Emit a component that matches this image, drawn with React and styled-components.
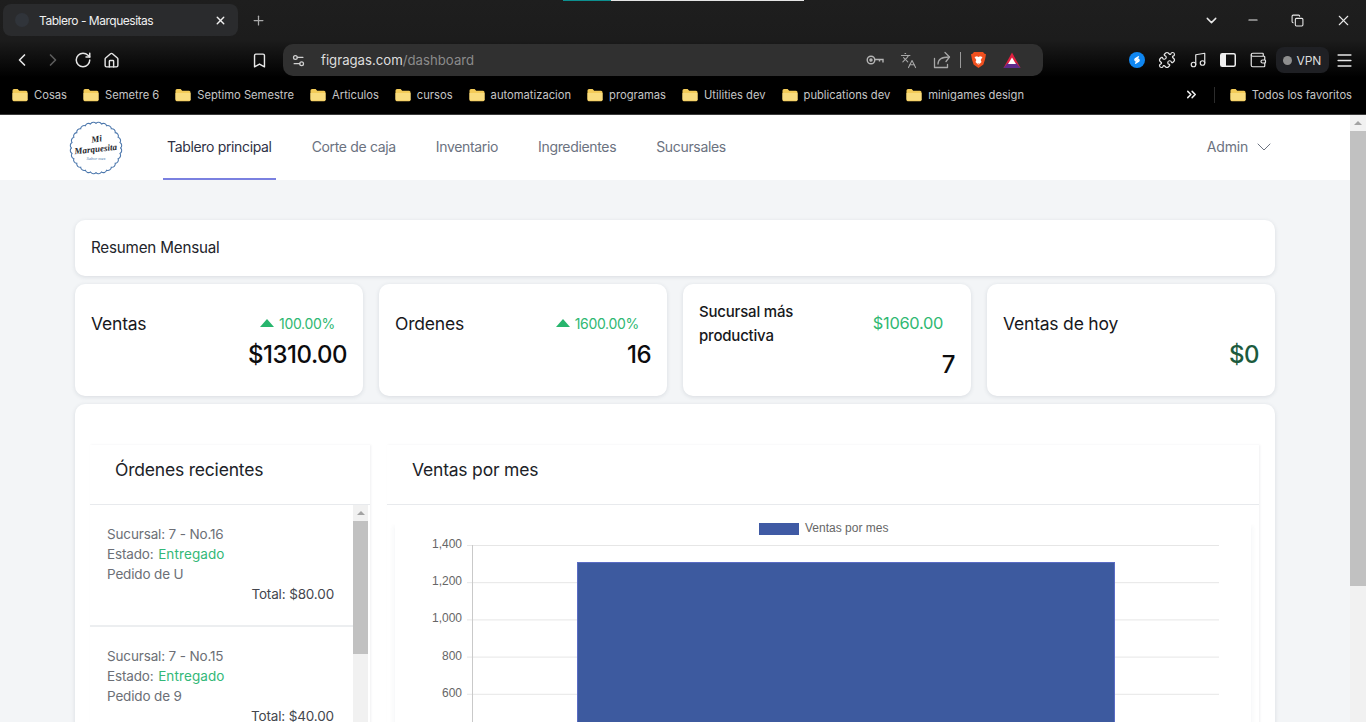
import React from 'react';
import styled, { createGlobalStyle } from 'styled-components';
import {
  ChevronLeft,
  ChevronRight,
  ChevronDown,
  ChevronsRight,
  RotateCw,
  Home,
  Bookmark,
  Settings2,
  Languages,
  Puzzle,
  Music,
  Wallet,
  Menu,
  X,
  Minus,
  Plus,
  Copy,
} from 'lucide-react';

const bookmarks = [
  'Cosas',
  'Semetre 6',
  'Septimo Semestre',
  'Articulos',
  'cursos',
  'automatizacion',
  'programas',
  'Utilities dev',
  'publications dev',
  'minigames design',
];

const navItems = ['Tablero principal', 'Corte de caja', 'Inventario', 'Ingredientes', 'Sucursales'];

const stats = [
  { label: 'Ventas', delta: '100.00%', arrow: true, value: '$1310.00' },
  { label: 'Ordenes', delta: '1600.00%', arrow: true, value: '16' },
  { label: 'Sucursal más productiva', delta: '$1060.00', small: true, value: '7' },
  { label: 'Ventas de hoy', value: '$0', green: true },
];

const orders = [
  { id: '7 - No.16', who: 'U', total: '$80.00' },
  { id: '7 - No.15', who: '9', total: '$40.00' },
];

const Global = createGlobalStyle`
  html, body {
    margin: 0;
    padding: 0;
    overflow: hidden;
    background: #000;
  }
  * {
    box-sizing: border-box;
  }
`;

const Screen = styled.div`
  position: relative;
  width: 1366px;
  height: 722px;
  overflow: hidden;
  display: flex;
  flex-direction: column;
  font-family: 'Inter', 'Liberation Sans', sans-serif;
`;

const Chrome = styled.div`
  height: 115px;
  flex: none;
  background: linear-gradient(180deg, #1e1e1e 0%, #1c1c1c 35%, #000 68%, #000 100%);
  border-bottom: 1px solid #3a3a3a;
  color: #e8e8e8;
`;

const LoadBar = styled.div`
  position: absolute;
  top: 0;
  left: 563px;
  width: 241px;
  height: 1px;
  background: linear-gradient(90deg, #0c8f8f 0 48px, #e4e4e4 48px);
`;

const TabStrip = styled.div`
  height: 40px;
  display: flex;
  align-items: center;
  padding: 4px 0 4px 3px;
`;

const Tab = styled.div`
  width: 235px;
  height: 32px;
  background: #2a2b2d;
  border-radius: 8px;
  display: flex;
  align-items: center;
  padding: 0 11px 0 12px;
  font-size: 12px;
  color: #f0f0f0;
`;

const Favicon = styled.span`
  width: 14px;
  height: 14px;
  margin-right: 10px;
  border-radius: 50%;
  background: #30343a;
  flex: none;
`;

const TabTitle = styled.span`
  flex: 1;
  letter-spacing: -0.48px;
`;

const NewTab = styled.div`
  display: flex;
  margin-left: 13px;
  color: #aaa;
`;

const WindowButtons = styled.div`
  margin-left: auto;
  display: flex;
  align-items: center;
  gap: 31px;
  padding-right: 14px;
`;

const TabListChevron = styled(ChevronDown)`
  margin-right: -5px;
`;

const Toolbar = styled.div`
  height: 40px;
  display: flex;
  align-items: center;
  padding: 0 12px 0 12px;
`;

const ToolGroup = styled.div`
  display: flex;
  align-items: center;
  gap: ${(p) => p.$gap || 12}px;
  color: ${(p) => p.$color || '#e6e6e6'};
`;

const BookmarkSlot = styled.div`
  display: flex;
  margin-left: 131px;
`;

const Omnibox = styled.div`
  width: 760px;
  height: 32px;
  margin-left: 15px;
  background: #303030;
  border-radius: 10px;
  display: flex;
  align-items: center;
  padding: 0 22px 0 8px;
  font-size: 13.2px;
  color: #dedede;
`;

const UrlHost = styled.span`
  margin-left: 15px;
`;

const UrlPath = styled.span`
  color: #8b8b8b;
`;

const Divider = styled.span`
  width: 1px;
  height: 16px;
  background: #9a9a9a;
`;

const BookmarkDivider = styled(Divider)`
  margin: 0 15px;
  background: #2c2c2c;
`;

const VpnPill = styled.div`
  height: 26px;
  margin: 0 -7px 0 -4px;
  padding: 0 8px 0 7px;
  background: #1f2024;
  border-radius: 8px;
  display: flex;
  align-items: center;
  gap: 5px;
  font-size: 12px;
  letter-spacing: -0.2px;
  color: #dcdcdc;
`;

const VpnDot = styled.span`
  width: 9px;
  height: 9px;
  border-radius: 50%;
  background: #8e8e8e;
`;

const BookmarkBar = styled.div`
  height: 34px;
  display: flex;
  align-items: center;
  padding: 0 14px 5px 12px;
  font-size: 11.2px;
  color: #c6c6c6;
`;

const BookmarkItem = styled.div`
  display: flex;
  align-items: center;
  gap: 6px;
  margin-right: ${(p) => p.$gap ?? 16}px;
  white-space: nowrap;
`;

const Spacer = styled.div`
  flex: 1;
`;

const Viewport = styled.div`
  flex: 1;
  min-height: 0;
  display: flex;
  background: #f3f5f7;
`;

const Page = styled.div`
  flex: 1;
  min-width: 0;
  overflow: hidden;
`;

const Scrollbar = styled.div`
  width: ${(p) => p.$width}px;
  flex: none;
  background: #f1f1f1;
  display: flex;
  flex-direction: column;
  align-items: center;
`;

const ScrollArrow = styled.div`
  height: 16px;
  flex: none;
  display: flex;
  align-items: center;
  justify-content: center;
  &::before {
    content: '';
    border-left: 4px solid transparent;
    border-right: 4px solid transparent;
    border-bottom: 4px solid #a3a3a3;
  }
`;

const ScrollThumb = styled.div`
  width: 100%;
  height: ${(p) => p.$height}px;
  background: #c1c1c1;
  flex: none;
`;

const Navbar = styled.nav`
  height: 65px;
  background: #fff;
  display: flex;
  align-items: stretch;
  padding: 0 74px 0 69px;
`;

const LogoSlot = styled.div`
  width: 94px;
  display: flex;
  align-items: center;
`;

const NavLinks = styled.div`
  display: flex;
  gap: 32px;
`;

const NavLink = styled.a`
  display: flex;
  align-items: center;
  padding: 0 4px;
  font-size: 14px;
  letter-spacing: -0.34px;
  color: ${(p) => (p.$active ? '#2e3145' : '#6b7280')};
  border-bottom: 2px solid ${(p) => (p.$active ? '#7a80e0' : 'transparent')};
`;

const AdminMenu = styled.div`
  margin-left: auto;
  display: flex;
  align-items: center;
  gap: 4px;
  padding-bottom: 2px;
  font-size: 14px;
  letter-spacing: -0.2px;
  color: #6b7280;
`;

const Container = styled.main`
  width: 1200px;
  margin: 40px 0 0 75px;
  display: flex;
  flex-direction: column;
  gap: 8px;
`;

const Card = styled.section`
  background: #fff;
  border-radius: 10px;
  box-shadow: 0 1px 4px rgba(60, 70, 90, 0.14);
`;

const SummaryCard = styled(Card)`
  height: 56px;
  display: flex;
  align-items: center;
  padding: 0 16px 2px;
  font-size: 15.2px;
  letter-spacing: -0.2px;
  color: #22242a;
`;

const StatGrid = styled.div`
  display: grid;
  grid-template-columns: repeat(4, 288px);
  gap: 16px;
`;

const StatCard = styled(Card)`
  height: 112px;
  padding: ${(p) => (p.$small ? 2 : 4)}px 16px 0;
  display: flex;
  flex-direction: column;
  justify-content: center;
`;

const StatTop = styled.div`
  display: flex;
  align-items: center;
  justify-content: space-between;
  padding-right: 12px;
`;

const StatLabel = styled.div`
  font-size: ${(p) => (p.$small ? 15 : 17.5)}px;
  font-weight: ${(p) => (p.$small ? 500 : 400)};
  line-height: 24px;
  max-width: ${(p) => (p.$small ? '125px' : 'none')};
  letter-spacing: -0.2px;
  color: #17181c;
`;

const Delta = styled.div`
  display: flex;
  align-items: center;
  gap: 5px;
  margin-bottom: 2px;
  font-size: ${(p) => (p.$arrow ? 14 : 16.4)}px;
  letter-spacing: -0.3px;
  color: #2fb872;
  &::before {
    content: ${(p) => (p.$arrow ? "''" : 'none')};
    border-left: 7px solid transparent;
    border-right: 7px solid transparent;
    border-bottom: 8px solid #27b56d;
  }
`;

const StatValue = styled.div`
  margin-top: ${(p) => (p.$small ? 0 : 2)}px;
  text-align: right;
  font-size: 24px;
  font-weight: 500;
  line-height: 34px;
  letter-spacing: -0.5px;
  color: ${(p) => (p.$green ? '#1c5b3e' : '#0c0c0e')};
`;

const MainCard = styled(Card)`
  height: 340px;
  padding: 41px 15px 0;
  display: grid;
  grid-template-columns: 280px 872px;
  gap: 17px;
  align-items: start;
`;

const Panel = styled.div`
  background: #fff;
  box-shadow: 1px 0 2px rgba(60, 70, 90, 0.08);
  height: 300px;
`;

const PanelHead = styled.div`
  height: 60px;
  display: flex;
  align-items: center;
  padding: 0 25px 10px;
  font-size: 17.5px;
  letter-spacing: -0.2px;
  color: #202228;
  border-bottom: 1px solid #e8eaed;
`;

const ListFrame = styled.div`
  display: flex;
  height: 240px;
  padding-right: 2px;
`;

const OrderList = styled.div`
  flex: 1;
  min-width: 0;
`;

const OrderItem = styled.div`
  height: 122px;
  padding: 19px 19px 0 17px;
  font-size: 13.5px;
  line-height: 20px;
  letter-spacing: -0.15px;
  color: #6c6f76;
  border-bottom: 2px solid #eceef0;
`;

const Delivered = styled.span`
  margin-left: 1px;
  letter-spacing: 0.1px;
  color: #33b878;
`;

const OrderTotal = styled.div`
  text-align: right;
  color: #44464d;
`;

const ChartFrame = styled.div`
  margin: 17px 8px 0;
  height: 225px;
  box-shadow: -2px 4px 4px rgba(60, 70, 90, 0.04), 2px 4px 4px rgba(60, 70, 90, 0.04);
`;

const FolderIcon = () => (
  <svg width="16" height="14" viewBox="0 0 16 14">
    <path d="M0.5 2.5a1.5 1.5 0 0 1 1.5-1.5h3.6l1.6 1.7h6.8a1.5 1.5 0 0 1 1.5 1.5v7.6a1.5 1.5 0 0 1-1.5 1.5H2a1.5 1.5 0 0 1-1.5-1.5z" fill="#f3cb58" />
    <path d="M0.5 5h15v6a1 1 0 0 1-1 1.5H2a1.5 1.5 0 0 1-1.5-1.5z" fill="#f9dc7e" />
  </svg>
);

const KeyIcon = () => (
  <svg width="18" height="10" viewBox="0 0 18 10" fill="none" stroke="#b5b5b5" strokeWidth="1.4">
    <circle cx="5" cy="5" r="3.8" />
    <circle cx="5" cy="5" r="1" fill="#b5b5b5" />
    <path d="M9 4.5h8v3M13.5 4.5v2" />
  </svg>
);

const ShareOutIcon = () => (
  <svg width="18" height="18" viewBox="0 0 18 18" fill="none" stroke="#a8a8a8" strokeWidth="1.3" strokeLinecap="round" strokeLinejoin="round">
    <path d="M1.5 7.5v9h13v-3" />
    <path d="M5 13c0-4.5 3.5-7 11-7" />
    <path d="M12 1.5l4.5 4.5-3.5 4.5" />
  </svg>
);

const BraveIcon = () => (
  <svg width="17" height="18" viewBox="0 0 17 18">
    <path d="M4 1h9l1.5 1.8 1.5.4-1 5.3-1.6 5-4.9 3.5-4.9-3.5-1.6-5-1-5.3 1.5-.4z" fill="#f0501f" />
    <path d="M4.5 6l2.5-.8 1.5.8 1.5-.8 2.5.8-1.8 3 .8 2-3 3-3-3 .8-2z" fill="#fff" />
    <path d="M7.3 12.5h2.4l-1.2 1.2z" fill="#f0501f" />
  </svg>
);

const BatIcon = () => (
  <svg width="18" height="17" viewBox="0 0 18 17">
    <path d="M9 0.5L17.5 16H0.5z" fill="#e0203f" />
    <path d="M0.5 16L4.8 11h8.4L17.5 16z" fill="#5d2a8c" />
    <path d="M9 5.5L13 12H5z" fill="#fff" />
  </svg>
);

const ShazamIcon = () => (
  <svg width="16" height="16" viewBox="0 0 16 16">
    <circle cx="8" cy="8" r="8" fill="#0f86f0" />
    <path d="M9.4 4.8L6.3 6.7a1.4 1.4 0 0 0 1.4 2.3l.9-.5M6.6 11.2l3.1-1.9a1.4 1.4 0 0 0-1.4-2.3l-.9.5" fill="none" stroke="#fff" strokeWidth="1.4" strokeLinecap="round" />
  </svg>
);

const SidebarIcon = () => (
  <svg width="16" height="14" viewBox="0 0 16 14">
    <rect x="0.75" y="0.75" width="14.5" height="12.5" rx="1.5" fill="none" stroke="#eee" strokeWidth="1.5" />
    <rect x="1" y="1" width="5" height="12" fill="#eee" />
  </svg>
);

// wavy badge edge: small arcs between points of a circle
const scallopPath = (cx, cy, r, count) => {
  const at = (i) => {
    const a = (i / count) * Math.PI * 2;
    return `${(cx + r * Math.cos(a)).toFixed(2)} ${(cy + r * Math.sin(a)).toFixed(2)}`;
  };
  let d = `M${at(0)}`;
  for (let i = 1; i <= count; i++) d += `A3.4 3.4 0 0 1 ${at(i)}`;
  return `${d}Z`;
};

const ShopLogo = () => (
  <svg width="54" height="54" viewBox="0 0 54 54">
    <path d={scallopPath(27, 27, 24.6, 28)} fill="#fff" stroke="#4d78ad" strokeWidth="1.1" />
    <g fontFamily="'Liberation Serif', serif" fontWeight="700" fontStyle="italic" fill="#23252b" textAnchor="middle">
      <text x="28" y="21" fontSize="9" transform="rotate(-8 28 21)">Mi</text>
      <text x="27" y="31" fontSize="9" transform="rotate(-6 27 31)">Marquesita</text>
      <text x="27" y="39" fontSize="4.5" fontWeight="400" fill="#4d78ad">Sabor mex</text>
    </g>
  </svg>
);

const ticks = [
  { label: '1,400', y: 23 },
  { label: '1,200', y: 60.2 },
  { label: '1,000', y: 97.4 },
  { label: '800', y: 134.6 },
  { label: '600', y: 171.8 },
];

const SalesChart = () => (
  <svg width="856" height="225" viewBox="0 0 856 225">
    <rect x="364" y="1" width="40" height="12" fill="#3f5aa4" />
    <text x="410" y="10" fontFamily="'Liberation Sans', sans-serif" fontSize="12" fill="#666">Ventas por mes</text>
    {ticks.map((t) => (
      <g key={t.label}>
        <line x1="72" x2="824" y1={t.y + 0.5} y2={t.y + 0.5} stroke="#e6e6e6" />
        <text x="67" y={t.y + 3} textAnchor="end" fontFamily="'Liberation Sans', sans-serif" fontSize="12" fill="#666">{t.label}</text>
      </g>
    ))}
    <line x1="77.5" x2="77.5" y1="23" y2="225" stroke="#c9c9c9" />
    <rect x="182.5" y="40.5" width="537" height="190" fill="#3d5a9f" stroke="#5a6cc4" />
  </svg>
);

const App = () => (
  <Screen>
    <Global />
    <Chrome>
      <LoadBar />
      <TabStrip>
        <Tab>
          <Favicon />
          <TabTitle>Tablero - Marquesitas</TabTitle>
          <X size={13} strokeWidth={2.5} />
        </Tab>
        <NewTab>
          <Plus size={15} />
        </NewTab>
        <WindowButtons>
          <TabListChevron size={17} />
          <Minus size={14} />
          <Copy size={13} />
          <X size={17} strokeWidth={1.5} />
        </WindowButtons>
      </TabStrip>
      <Toolbar>
        <ToolGroup $gap={11}>
          <ChevronLeft size={20} />
          <ChevronRight size={20} color="#5c5c5c" />
          <RotateCw size={18} />
          <Home size={17} />
        </ToolGroup>
        <BookmarkSlot>
          <Bookmark size={17} />
        </BookmarkSlot>
        <Omnibox>
          <Settings2 size={15} color="#d0d0d0" />
          <UrlHost>
            figragas.com<UrlPath>/dashboard</UrlPath>
          </UrlHost>
          <Spacer />
          <ToolGroup $gap={16} $color="#a8a8a8">
            <KeyIcon />
            <Languages size={17} strokeWidth={1.5} />
            <ToolGroup $gap={9} $color="#a8a8a8">
              <ShareOutIcon />
              <Divider />
              <BraveIcon />
            </ToolGroup>
            <BatIcon />
          </ToolGroup>
        </Omnibox>
        <Spacer />
        <ToolGroup $gap={13}>
          <ShazamIcon />
          <Puzzle size={18} strokeWidth={1.6} />
          <Music size={18} strokeWidth={1.6} />
          <SidebarIcon />
          <Wallet size={18} strokeWidth={1.6} />
          <VpnPill>
            <VpnDot />
            VPN
          </VpnPill>
          <Menu size={19} />
        </ToolGroup>
      </Toolbar>
      <BookmarkBar>
        {bookmarks.map((b) => (
          <BookmarkItem key={b}>
            <FolderIcon />
            {b}
          </BookmarkItem>
        ))}
        <Spacer />
        <ChevronsRight size={15} strokeWidth={2.4} color="#eee" />
        <BookmarkDivider />
        <BookmarkItem $gap={0}>
          <FolderIcon />
          Todos los favoritos
        </BookmarkItem>
      </BookmarkBar>
    </Chrome>
    <Viewport>
      <Page>
        <Navbar>
          <LogoSlot>
            <ShopLogo />
          </LogoSlot>
          <NavLinks>
            {navItems.map((n, i) => (
              <NavLink key={n} $active={i === 0}>
                {n}
              </NavLink>
            ))}
          </NavLinks>
          <AdminMenu>
            Admin
            <ChevronDown size={24} strokeWidth={1} />
          </AdminMenu>
        </Navbar>
        <Container>
          <SummaryCard>Resumen Mensual</SummaryCard>
          <StatGrid>
            {stats.map((s) => (
              <StatCard key={s.label} $small={s.small}>
                <StatTop>
                  <StatLabel $small={s.small}>{s.label}</StatLabel>
                  {s.delta && <Delta $arrow={s.arrow}>{s.delta}</Delta>}
                </StatTop>
                <StatValue $green={s.green} $small={s.small}>
                  {s.value}
                </StatValue>
              </StatCard>
            ))}
          </StatGrid>
          <MainCard>
            <Panel>
              <PanelHead>Órdenes recientes</PanelHead>
              <ListFrame>
                <OrderList>
                  {orders.map((o) => (
                    <OrderItem key={o.id}>
                      Sucursal: {o.id}
                      <br />
                      Estado: <Delivered>Entregado</Delivered>
                      <br />
                      Pedido de {o.who}
                      <OrderTotal>Total: {o.total}</OrderTotal>
                    </OrderItem>
                  ))}
                </OrderList>
                <Scrollbar $width={15}>
                  <ScrollArrow />
                  <ScrollThumb $height={133} />
                </Scrollbar>
              </ListFrame>
            </Panel>
            <Panel>
              <PanelHead>Ventas por mes</PanelHead>
              <ChartFrame>
                <SalesChart />
              </ChartFrame>
            </Panel>
          </MainCard>
        </Container>
      </Page>
      <Scrollbar $width={16}>
        <ScrollArrow />
        <ScrollThumb $height={455} />
      </Scrollbar>
    </Viewport>
  </Screen>
);

export default App;
